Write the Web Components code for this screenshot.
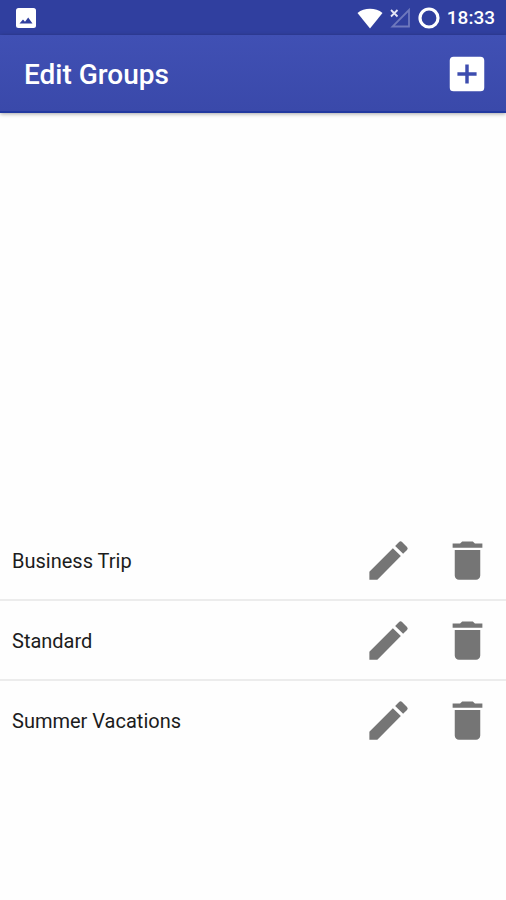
<!DOCTYPE html>
<html lang="en">
<head>
<meta charset="utf-8">
<meta name="viewport" content="width=device-width, initial-scale=1">
<title>Edit Groups</title>
<style>
  body { margin: 0; background: #fefefe; font-family: Roboto, "Liberation Sans", sans-serif; }
</style>
</head>
<body>
<groups-screen></groups-screen>
<script>
  function define(name, html, setup) {
    customElements.define(name, class extends HTMLElement {
      constructor() {
        super();
        this.attachShadow({ mode: "open" }).innerHTML = html;
      }
      connectedCallback() {
        if (setup) setup(this, this.shadowRoot);
      }
    });
  }

  define("status-bar", `
    <style>
      :host { display: flex; align-items: center; justify-content: space-between; height: 35px; padding: 0 11px 0 16px; background: #303f9f; color: #fff; }
      svg { display: block; }
      .right { display: flex; align-items: center; gap: 7px; }
      time { font-size: 19px; line-height: 24px; font-weight: 500; }
    </style>
    <svg width="20" height="20" viewBox="0 0 20 20" role="img" aria-label="Picture saved">
      <rect width="20" height="20" rx="2.5" fill="#fff"/>
      <path d="M3.500 15.500 7 11.500l2 2.200 3.200-4.200 4.300 6z" fill="#303f9f"/>
    </svg>
    <div class="right">
      <svg width="26" height="22" viewBox="0 0 26 22" role="img" aria-label="Wi-Fi">
        <path d="M13 21.500.5 6C4 3.200 8.300 1.800 13 1.800S22 3.200 25.500 6z" fill="#fff"/>
      </svg>
      <svg width="21" height="22" viewBox="0 0 21 22" role="img" aria-label="No mobile signal">
        <path d="M19 3v16.500H2.500z" fill="none" stroke="#6e78bd" stroke-width="1.800"/>
        <path d="M.8 2.800 8 10M8 2.800.8 10" stroke="#303f9f" stroke-width="4"/>
        <path d="M1 3 7.500 9.500M7.500 3 1 9.500" stroke="#e4e6f5" stroke-width="1.800"/>
      </svg>
      <svg width="22" height="22" viewBox="0 0 22 22" role="img" aria-label="Battery">
        <circle cx="11" cy="11" r="9" fill="none" stroke="#fff" stroke-width="3.200"/>
      </svg>
      <time>18:33</time>
    </div>`);

  define("app-bar", `
    <style>
      :host { display: flex; align-items: center; justify-content: space-between; height: 78px; box-sizing: border-box; padding: 2px 16px 0 24px; color: #fff;
        background: linear-gradient(#4050b4, #3a49aa); border-bottom: 2px solid #2239a0; box-shadow: 0 1px 4px rgba(0,0,0,.35); position: relative; }
      h1 { margin: 0; padding-top: 2px; font-size: 28px; line-height: 36px; font-weight: 500; }
      button { display: block; padding: 0; border: 0; background: none; color: inherit; cursor: pointer; }
      svg { display: block; width: 46px; height: 46px; fill: currentColor; }
    </style>
    <h1><slot></slot></h1>
    <button type="button" aria-label="Add group">
      <svg viewBox="0 0 24 24"><path d="M19 3H5a2 2 0 0 0-2 2v14a2 2 0 0 0 2 2h14a2 2 0 0 0 2-2V5a2 2 0 0 0-2-2zm-2 9.900h-4.100V17h-1.800v-4.100H7v-1.800h4.100V7h1.800v4.100H17z"/></svg>
    </button>`);

  define("group-row", `
    <style>
      :host { display: flex; align-items: center; gap: 28px; height: 80px; box-sizing: border-box; padding: 0 13px 0 12px; border-bottom: 2px solid #ececec; color: #1c1c1c; }
      :host(:last-of-type) { border-bottom-color: transparent; }
      span { flex: 1; padding-top: 2px; font-size: 20px; line-height: 28px; }
      button { display: block; padding: 0; border: 0; background: none; color: #757575; cursor: pointer; }
      svg { display: block; width: 51px; height: 51px; fill: currentColor; }
    </style>
    <span><slot></slot></span>
    <button type="button" class="edit">
      <svg viewBox="0 0 24 24"><path d="M3 17.250V21h3.750L17.810 9.940l-3.750-3.750L3 17.250zM20.710 7.040a1 1 0 0 0 0-1.410l-2.340-2.340a1 1 0 0 0-1.410 0l-1.830 1.830 3.750 3.750 1.830-1.830z"/></svg>
    </button>
    <button type="button" class="delete">
      <svg viewBox="0 0 24 24"><path d="M6 19c0 1.100.9 2 2 2h8c1.100 0 2-.9 2-2V7H6v12zM19 4h-3.500l-1-1h-5l-1 1H5v2h14V4z"/></svg>
    </button>`, (host, root) => {
      const name = host.textContent.trim();
      root.querySelector(".edit").setAttribute("aria-label", "Edit " + name);
      root.querySelector(".delete").setAttribute("aria-label", "Delete " + name);
    });

  define("groups-screen", `
    <style>
      :host { display: flex; flex-direction: column; min-height: 100vh; }
      main { padding-top: 408px; }
    </style>
    <status-bar></status-bar>
    <app-bar>Edit Groups</app-bar>
    <main>
      <group-row>Business Trip</group-row>
      <group-row>Standard</group-row>
      <group-row>Summer Vacations</group-row>
    </main>`);
</script>
</body>
</html>
